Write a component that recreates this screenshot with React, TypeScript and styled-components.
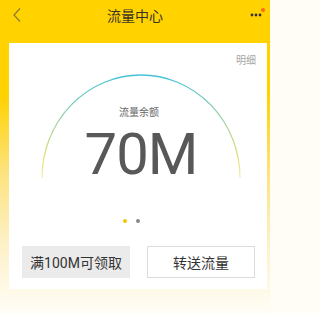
import styled, { createGlobalStyle } from "styled-components";

const GlobalStyle = createGlobalStyle`
  html, body {
    margin: 0;
    padding: 0;
    background: #fffdf6;
  }
  body {
    font-family: Roboto, "Noto Sans CJK SC", sans-serif;
  }
`;

const Page = styled.div`
  width: 270px;
  height: 313px;
  overflow: hidden;
  background: linear-gradient(
    180deg,
    #ffd200 0px,
    #ffd200 95px,
    #fde27a 170px,
    #fdf0c4 240px,
    #fffbee 300px,
    #fffdf6 313px
  );
  display: flex;
  flex-direction: column;
`;

const Header = styled.div`
  position: relative;
  height: 29px;
  display: flex;
  align-items: center;
  justify-content: space-between;
  padding: 0 6px 0 9px;
`;

const Title = styled.div`
  position: absolute;
  left: 0;
  right: 0;
  text-align: center;
  font-size: 14px;
  color: #3a3320;
  pointer-events: none;
`;

const IconButton = styled.div`
  position: relative;
  display: flex;
  align-items: center;
  justify-content: center;
  width: 16px;
  height: 20px;
`;

const Badge = styled.span`
  position: absolute;
  top: 3px;
  right: -1px;
  width: 4px;
  height: 4px;
  border-radius: 50%;
  background: #ff6a1a;
`;

const Card = styled.div`
  margin: 14px 3px 0 9px;
  height: 246px;
  background: #fff;
  display: flex;
  flex-direction: column;
  padding: 0 11px 11px 13px;
  box-sizing: border-box;
`;

const DetailLink = styled.div`
  align-self: flex-end;
  margin-top: 9px;
  font-size: 10px;
  color: #a5a5a5;
  font-family: "Noto Sans CJK SC", sans-serif;
`;

const Gauge = styled.div`
  position: relative;
  height: 110px;
  margin-top: 5px;
  display: flex;
  flex-direction: column;
  align-items: center;
`;

const ArcSvg = styled.svg`
  position: absolute;
  left: 16px;
  top: 0;
`;

const GaugeLabel = styled.div`
  margin-top: 32px;
  font-size: 10px;
  color: #666;
  font-family: "Noto Sans CJK SC", sans-serif;
`;

const Amount = styled.div`
  margin-top: 6px;
  font-family: Roboto, "Liberation Sans", sans-serif;
  font-weight: 400;
  font-size: 58px;
  line-height: 58px;
  color: #585858;
  letter-spacing: -1px;
  padding-left: 4px;
`;

const Dots = styled.div`
  display: flex;
  justify-content: center;
  gap: 9px;
  margin-top: 37px;
  padding-right: 16px;
`;

const Dot = styled.span<{ $active?: boolean }>`
  width: 4px;
  height: 4px;
  border-radius: 50%;
  background: ${(p) => (p.$active ? "#f5c400" : "#888")};
`;

const Actions = styled.div`
  display: flex;
  gap: 17px;
  margin-top: auto;
`;

const ActionButton = styled.button<{ $filled?: boolean }>`
  width: 108px;
  height: 32px;
  border: 1px solid ${(p) => (p.$filled ? "#ebebeb" : "#dcdcdc")};
  background: ${(p) => (p.$filled ? "#ebebeb" : "#fff")};
  color: #333;
  font-size: 14px;
  font-family: Roboto, "Noto Sans CJK SC", sans-serif;
  padding: 0;
  cursor: pointer;
`;

const ArcGauge = () => (
  <ArcSvg width="206" height="110" viewBox="0 0 206 110">
    <defs>
      <linearGradient id="arcGrad" x1="0" y1="0" x2="0" y2="1">
        <stop offset="0" stopColor="#45c2d8" />
        <stop offset="0.45" stopColor="#9fd4a0" />
        <stop offset="0.8" stopColor="#e4e27a" />
        <stop offset="1" stopColor="#f3efb8" />
      </linearGradient>
    </defs>
    <path
      d="M 4 106 A 99 103 0 0 1 202 106"
      fill="none"
      stroke="url(#arcGrad)"
      strokeWidth="1.3"
    />
  </ArcSvg>
);

const App = () => {
  return (
    <Page>
      <GlobalStyle />
      <Header>
        <IconButton>
          <svg width="10" height="16" viewBox="0 0 10 16">
            <path
              d="M8 1.5 L2 8 L8 14.5"
              fill="none"
              stroke="#8c7a30"
              strokeWidth="1.2"
            />
          </svg>
        </IconButton>
        <Title>流量中心</Title>
        <IconButton>
          <svg width="12" height="4" viewBox="0 0 12 4">
            <circle cx="2" cy="2" r="1.4" fill="#3a3320" />
            <circle cx="6" cy="2" r="1.4" fill="#3a3320" />
            <circle cx="10" cy="2" r="1.4" fill="#3a3320" />
          </svg>
          <Badge />
        </IconButton>
      </Header>
      <Card>
        <DetailLink>明细</DetailLink>
        <Gauge>
          <ArcGauge />
          <GaugeLabel>流量余额</GaugeLabel>
          <Amount>70M</Amount>
        </Gauge>
        <Dots>
          <Dot $active />
          <Dot />
        </Dots>
        <Actions>
          <ActionButton $filled>满100M可领取</ActionButton>
          <ActionButton>转送流量</ActionButton>
        </Actions>
      </Card>
    </Page>
  );
};

export default App;
